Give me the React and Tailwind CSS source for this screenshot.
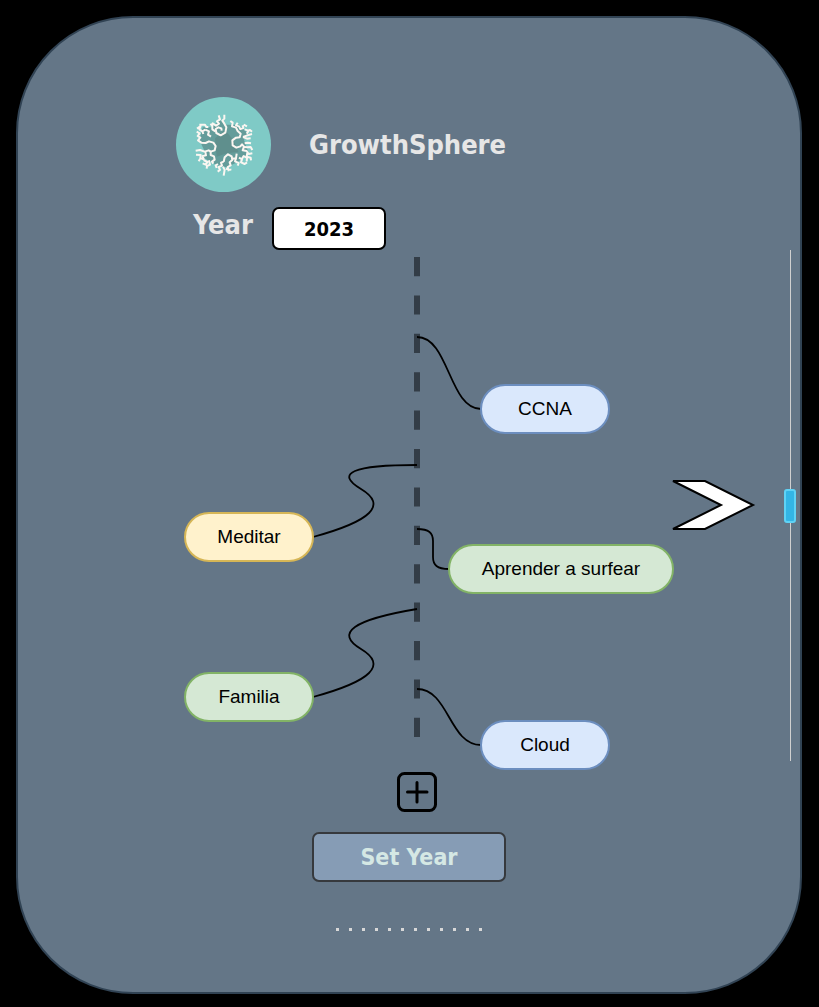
const NODES = [
  { label: "CCNA", box: "left-[296px] top-[134px] w-[130px]", tone: "border-[#6c8ebf] bg-[#dae8fc]" },
  { label: "Meditar", box: "left-0 top-[262px] w-[130px]", tone: "border-[#d6b656] bg-[#fff2cc]" },
  { label: "Aprender a surfear", box: "left-[264px] top-[294px] w-[226px]", tone: "border-[#82b366] bg-[#d5e8d4]" },
  { label: "Familia", box: "left-0 top-[422px] w-[130px]", tone: "border-[#82b366] bg-[#d5e8d4]" },
  { label: "Cloud", box: "left-[296px] top-[470px] w-[130px]", tone: "border-[#6c8ebf] bg-[#dae8fc]" },
];

function Logo() {
  return (
    <svg viewBox="18 21 285 285" className="size-[95px] shrink-0" role="img" aria-label="GrowthSphere">
      <circle cx="160.500" cy="163.500" r="142.500" fill="#7fcac6" />
      <path d="M98 112L125 112L150 90L168 104L205 104L232 128L222 150L236 188L205 215L170 232L140 226L96 200L104 184L88 150Z" fill="#649c9a" />
      <path d="M135 145L165 120L190 150L205 185L170 190L140 200Z" fill="#5f8f8d" />
      <g fill="none" stroke="#fbf6f1" strokeWidth="6" strokeLinejoin="round">
        <path d="M163 74V86L157 92L163 101L169 112L166 128L152 136L139 129L137 117L145 112L154 115L155 122" />
        <path d="M146 76L150 88L141 94L147 101L138 107L128 100L125 108M106 119L97 124L88 118L92 108L81 116M106 119L117 124L114 134L123 140M97 124L100 132" />
        <path d="M88 104H105L109 111H115M121 102L127 106V118L136 124M80 125L89 130L83 138L91 143L84 151L94 158L107 159L117 154L130 158L137 168L134 181L122 185L116 181L104 185L90 180L77 182" />
        <path d="M122 185L122 195L132 199L134 209L126 215L130 221M106 186L108 196L98 198L101 208L91 204L92 195L78 194M90 207L86 214M101 210L112 216L107 224L98 220M117 211L120 224L111 228L110 236" />
        <path d="M161 215L164 202L174 193L185 199L187 210L179 217L182 226L173 231L176 244M161 215L153 218L156 227L146 231L150 240L143 245M159 230L164 239L161 257M144 222L137 226L140 234M168 236L184 239" />
        <path d="M186 206L198 205L195 214L206 219L203 227M198 205L200 191M207 203L216 208L213 217L224 222L231 217M216 206L221 198L231 204L230 214" />
        <path d="M181 93L188 98L186 109L198 113L203 123L212 131L209 142L198 143L187 151L188 166L199 173L211 169L216 163L222 170L218 181L230 183L236 192L247 190" />
        <path d="M203 98L198 106L207 109L211 117L220 114L218 106M221 104L231 109M224 118L236 122L230 131M219 141L230 137L246 132M232 122L240 120L246 125M219 141L231 146L242 145M224 160L233 158L243 160M222 171L232 172L242 171L247 180M232 188L230 200L242 203L243 211" />
      </g>
    </svg>
  );
}

function Timeline() {
  return (
    <div className="relative h-[520px] w-[488px] shrink-0">
      <svg viewBox="0 0 488 520" className="absolute inset-0 size-full" fill="none" aria-hidden="true">
        <path d="M233 7V487" stroke="#333d47" strokeWidth="6" strokeDasharray="19.200 19.200" />
        <g stroke="#000" strokeWidth="1.800">
          <path d="M233 87C265 87 265 159 297 159" />
          <path d="M129 287Q217 263 177 239T233 215" />
          <path d="M233 279C245 279 249 283 249 291V307C249 315 253 319 265 319" />
          <path d="M129 447Q217 423 177 399T233 359" />
          <path d="M233 439C265 439 265 495 297 495" />
        </g>
      </svg>
      {NODES.map((n) => (
        <button
          key={n.label}
          type="button"
          className={`absolute h-[50px] rounded-full border-2 text-[19px] leading-6 text-black ${n.box} ${n.tone}`}
        >
          {n.label}
        </button>
      ))}
    </div>
  );
}

export default function App() {
  return (
    <div className="flex min-h-screen bg-black pt-4 pr-[17px] pb-[13px] pl-4 font-['Liberation_Sans',Arial,sans-serif]">
      <main className="flex-1 rounded-[117px] border-2 border-[#314354] bg-[#647687] pt-[79px] pb-14">
        <div className="mx-auto max-w-[782px]">
          <header className="flex items-center gap-[38px] pl-[158px]">
            <Logo />
            <h1 className="font-['DejaVu_Sans_Condensed','Noto_Sans',sans-serif] text-[27px] leading-9 font-bold text-[#e6e6e6]">GrowthSphere</h1>
          </header>
          <div className="mt-[15px] flex items-start gap-[19px] pl-[175px] font-['DejaVu_Sans_Condensed','Noto_Sans',sans-serif] font-bold">
            <label htmlFor="year" className="text-[27px] leading-9 text-[#e6e6e6]">Year</label>
            <input
              id="year"
              defaultValue="2023"
              className="h-[43px] w-[114px] rounded-[7px] border-2 border-black bg-white text-center text-[20px] text-black"
            />
          </div>

          <section className="flex pl-[166px]">
            <Timeline />
            <button type="button" aria-label="Next year" className="mt-[228px] h-[54px] w-[84px] shrink-0">
              <svg viewBox="0 0 84 54" className="size-full" aria-hidden="true">
                <path d="M1 3H33L81 27L33 51H1L49 27Z" fill="#fff" stroke="#000" strokeWidth="2" />
              </svg>
            </button>
            <input
              type="range"
              aria-label="Scroll timeline"
              min="0"
              max="100"
              defaultValue="50"
              className="ml-auto mr-1 h-[511px] w-3 appearance-none bg-[linear-gradient(#d0d0d0,#d0d0d0)] bg-size-[1px_100%] bg-center bg-no-repeat [writing-mode:vertical-lr] [&::-webkit-slider-thumb]:h-[34px] [&::-webkit-slider-thumb]:w-3 [&::-webkit-slider-thumb]:appearance-none [&::-webkit-slider-thumb]:rounded-[3px] [&::-webkit-slider-thumb]:border-2 [&::-webkit-slider-thumb]:border-[#5fd2f5] [&::-webkit-slider-thumb]:bg-[#33b5e5]"
            />
          </section>

          <div className="mt-0.5 flex justify-center pl-[15px]">
            <button type="button" aria-label="Add goal" className="size-10">
              <svg viewBox="0 0 40 40" className="size-full" fill="none" stroke="#000" strokeWidth="3" strokeLinecap="round" aria-hidden="true">
                <rect x="1.500" y="1.500" width="37" height="37" rx="6" />
                <path d="M20 10.500V30M10.500 20H30" />
              </svg>
            </button>
          </div>
          <div className="mt-5 flex justify-center">
            <button
              type="button"
              className="h-[50px] w-[194px] rounded-[7px] border-2 border-[#36393d] bg-[#869cb5] font-['DejaVu_Sans_Condensed','Noto_Sans',sans-serif] text-[23px] leading-7 font-bold text-[#d5e8e4]"
            >
              Set Year
            </button>
          </div>
          <div className="mt-[46px] flex justify-center gap-[10px]" aria-hidden="true">
            {Array.from({ length: 12 }, (_, i) => (
              <span key={i} className="size-[3px] bg-[#d8d8d8]" />
            ))}
          </div>
        </div>
      </main>
    </div>
  );
}
